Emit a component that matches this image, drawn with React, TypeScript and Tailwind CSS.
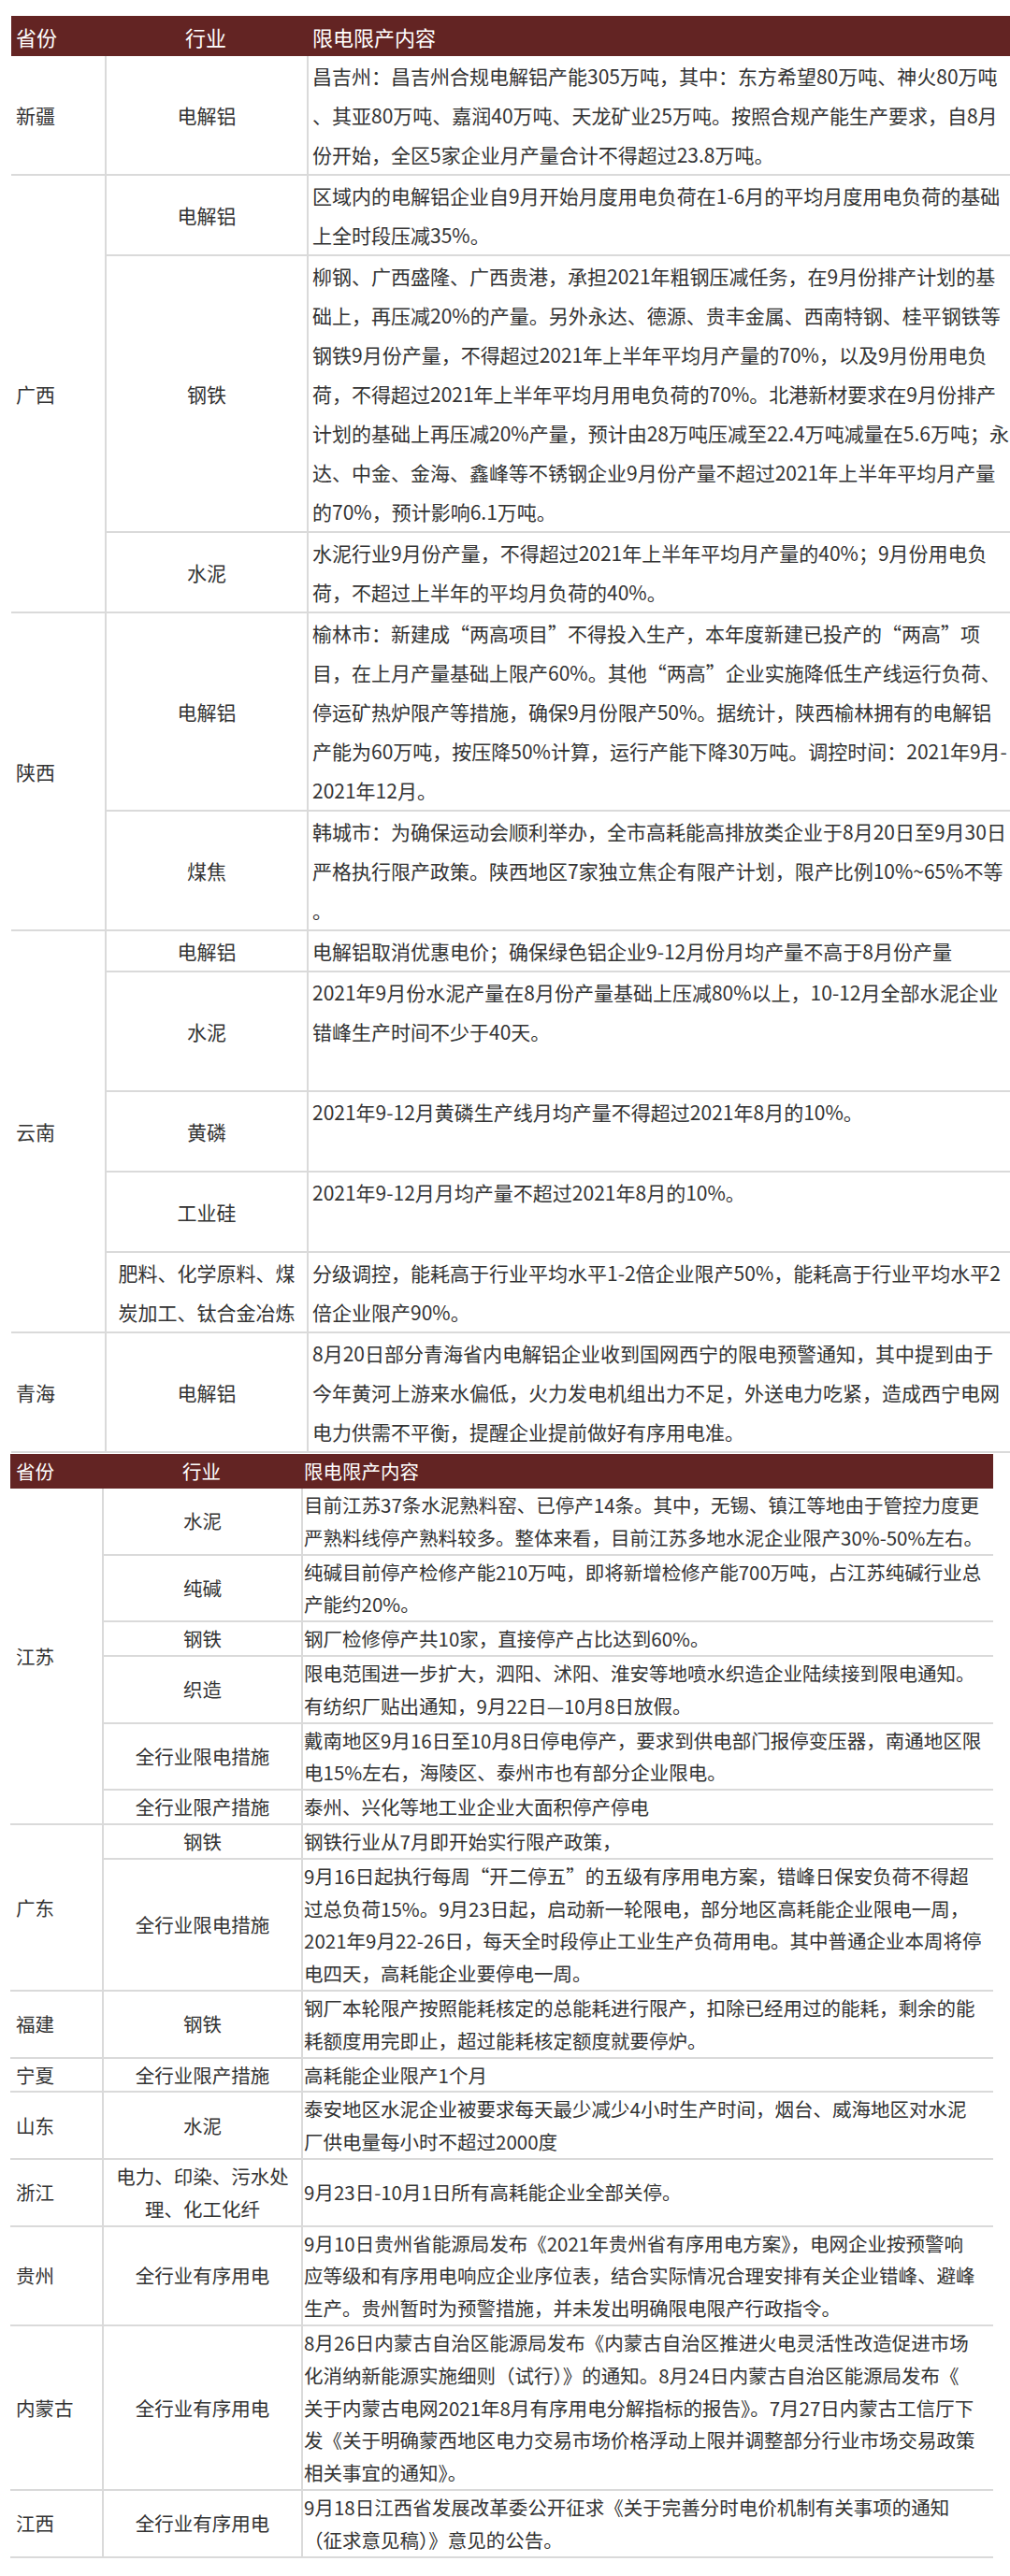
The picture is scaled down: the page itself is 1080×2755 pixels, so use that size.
import React from "react";

type Row = { ind: string[]; lines: string[] };
type Group = { prov: string; rows: Row[] };

const tableOne: Group[] = [
  {
    prov: "新疆",
    rows: [
      {
        ind: ["电解铝"],
        lines: [
          "昌吉州：昌吉州合规电解铝产能305万吨，其中：东方希望80万吨、神火80万吨",
          "、其亚80万吨、嘉润40万吨、天龙矿业25万吨。按照合规产能生产要求，自8月",
          "份开始，全区5家企业月产量合计不得超过23.8万吨。",
        ],
      },
    ],
  },
  {
    prov: "广西",
    rows: [
      {
        ind: ["电解铝"],
        lines: [
          "区域内的电解铝企业自9月开始月度用电负荷在1-6月的平均月度用电负荷的基础",
          "上全时段压减35%。",
        ],
      },
      {
        ind: ["钢铁"],
        lines: [
          "柳钢、广西盛隆、广西贵港，承担2021年粗钢压减任务，在9月份排产计划的基",
          "础上，再压减20%的产量。另外永达、德源、贵丰金属、西南特钢、桂平钢铁等",
          "钢铁9月份产量，不得超过2021年上半年平均月产量的70%，以及9月份用电负",
          "荷，不得超过2021年上半年平均月用电负荷的70%。北港新材要求在9月份排产",
          "计划的基础上再压减20%产量，预计由28万吨压减至22.4万吨减量在5.6万吨；永",
          "达、中金、金海、鑫峰等不锈钢企业9月份产量不超过2021年上半年平均月产量",
          "的70%，预计影响6.1万吨。",
        ],
      },
      {
        ind: ["水泥"],
        lines: [
          "水泥行业9月份产量，不得超过2021年上半年平均月产量的40%；9月份用电负",
          "荷，不超过上半年的平均月负荷的40%。",
        ],
      },
    ],
  },
  {
    prov: "陕西",
    rows: [
      {
        ind: ["电解铝"],
        lines: [
          "榆林市：新建成“两高项目”不得投入生产，本年度新建已投产的“两高”项",
          "目，在上月产量基础上限产60%。其他“两高”企业实施降低生产线运行负荷、",
          "停运矿热炉限产等措施，确保9月份限产50%。据统计，陕西榆林拥有的电解铝",
          "产能为60万吨，按压降50%计算，运行产能下降30万吨。调控时间：2021年9月-",
          "2021年12月。",
        ],
      },
      {
        ind: ["煤焦"],
        lines: [
          "韩城市：为确保运动会顺利举办，全市高耗能高排放类企业于8月20日至9月30日",
          "严格执行限产政策。陕西地区7家独立焦企有限产计划，限产比例10%~65%不等",
          "。",
        ],
      },
    ],
  },
  {
    prov: "云南",
    rows: [
      {
        ind: ["电解铝"],
        lines: ["电解铝取消优惠电价；确保绿色铝企业9-12月份月均产量不高于8月份产量"],
      },
      {
        ind: ["水泥"],
        lines: [
          "2021年9月份水泥产量在8月份产量基础上压减80%以上，10-12月全部水泥企业",
          "错峰生产时间不少于40天。",
          "",
        ],
      },
      {
        ind: ["黄磷"],
        lines: ["2021年9-12月黄磷生产线月均产量不得超过2021年8月的10%。", ""],
      },
      {
        ind: ["工业硅"],
        lines: ["2021年9-12月月均产量不超过2021年8月的10%。", ""],
      },
      {
        ind: ["肥料、化学原料、煤", "炭加工、钛合金冶炼"],
        lines: [
          "分级调控，能耗高于行业平均水平1-2倍企业限产50%，能耗高于行业平均水平2",
          "倍企业限产90%。",
        ],
      },
    ],
  },
  {
    prov: "青海",
    rows: [
      {
        ind: ["电解铝"],
        lines: [
          "8月20日部分青海省内电解铝企业收到国网西宁的限电预警通知，其中提到由于",
          "今年黄河上游来水偏低，火力发电机组出力不足，外送电力吃紧，造成西宁电网",
          "电力供需不平衡，提醒企业提前做好有序用电准。",
        ],
      },
    ],
  },
];

const tableTwo: Group[] = [
  {
    prov: "江苏",
    rows: [
      {
        ind: ["水泥"],
        lines: [
          "目前江苏37条水泥熟料窑、已停产14条。其中，无锡、镇江等地由于管控力度更",
          "严熟料线停产熟料较多。整体来看，目前江苏多地水泥企业限产30%-50%左右。",
        ],
      },
      {
        ind: ["纯碱"],
        lines: [
          "纯碱目前停产检修产能210万吨，即将新增检修产能700万吨，占江苏纯碱行业总",
          "产能约20%。",
        ],
      },
      { ind: ["钢铁"], lines: ["钢厂检修停产共10家，直接停产占比达到60%。"] },
      {
        ind: ["织造"],
        lines: [
          "限电范围进一步扩大，泗阳、沭阳、淮安等地喷水织造企业陆续接到限电通知。",
          "有纺织厂贴出通知，9月22日—10月8日放假。",
        ],
      },
      {
        ind: ["全行业限电措施"],
        lines: [
          "戴南地区9月16日至10月8日停电停产，要求到供电部门报停变压器，南通地区限",
          "电15%左右，海陵区、泰州市也有部分企业限电。",
        ],
      },
      { ind: ["全行业限产措施"], lines: ["泰州、兴化等地工业企业大面积停产停电"] },
    ],
  },
  {
    prov: "广东",
    rows: [
      { ind: ["钢铁"], lines: ["钢铁行业从7月即开始实行限产政策，"] },
      {
        ind: ["全行业限电措施"],
        lines: [
          "9月16日起执行每周“开二停五”的五级有序用电方案，错峰日保安负荷不得超",
          "过总负荷15%。9月23日起，启动新一轮限电，部分地区高耗能企业限电一周，",
          "2021年9月22-26日，每天全时段停止工业生产负荷用电。其中普通企业本周将停",
          "电四天，高耗能企业要停电一周。",
        ],
      },
    ],
  },
  {
    prov: "福建",
    rows: [
      {
        ind: ["钢铁"],
        lines: [
          "钢厂本轮限产按照能耗核定的总能耗进行限产，扣除已经用过的能耗，剩余的能",
          "耗额度用完即止，超过能耗核定额度就要停炉。",
        ],
      },
    ],
  },
  {
    prov: "宁夏",
    rows: [{ ind: ["全行业限产措施"], lines: ["高耗能企业限产1个月"] }],
  },
  {
    prov: "山东",
    rows: [
      {
        ind: ["水泥"],
        lines: [
          "泰安地区水泥企业被要求每天最少减少4小时生产时间，烟台、威海地区对水泥",
          "厂供电量每小时不超过2000度",
        ],
      },
    ],
  },
  {
    prov: "浙江",
    rows: [
      {
        ind: ["电力、印染、污水处", "理、化工化纤"],
        lines: ["9月23日-10月1日所有高耗能企业全部关停。"],
      },
    ],
  },
  {
    prov: "贵州",
    rows: [
      {
        ind: ["全行业有序用电"],
        lines: [
          "9月10日贵州省能源局发布《2021年贵州省有序用电方案》，电网企业按预警响",
          "应等级和有序用电响应企业序位表，结合实际情况合理安排有关企业错峰、避峰",
          "生产。贵州暂时为预警措施，并未发出明确限电限产行政指令。",
        ],
      },
    ],
  },
  {
    prov: "内蒙古",
    rows: [
      {
        ind: ["全行业有序用电"],
        lines: [
          "8月26日内蒙古自治区能源局发布《内蒙古自治区推进火电灵活性改造促进市场",
          "化消纳新能源实施细则（试行）》的通知。8月24日内蒙古自治区能源局发布《",
          "关于内蒙古电网2021年8月有序用电分解指标的报告》。7月27日内蒙古工信厅下",
          "发《关于明确蒙西地区电力交易市场价格浮动上限并调整部分行业市场交易政策",
          "相关事宜的通知》。",
        ],
      },
    ],
  },
  {
    prov: "江西",
    rows: [
      {
        ind: ["全行业有序用电"],
        lines: [
          "9月18日江西省发展改革委公开征求《关于完善分时电价机制有关事项的通知",
          "（征求意见稿）》意见的公告。",
        ],
      },
    ],
  },
];

const Lines = ({ items }: { items: string[] }) => (
  <>
    {items.map((l, i) => (
      <div key={i} className="whitespace-nowrap">
        {l || "\u00a0"}
      </div>
    ))}
  </>
);

const TableOne = () => (
  <table className="ml-[12px] mt-[17px] w-[1068px] table-fixed border-separate border-spacing-0 text-[21px] leading-[42px] text-[#333333]">
    <colgroup>
      <col className="w-[100px]" />
      <col className="w-[216px]" />
      <col />
    </colgroup>
    <thead>
      <tr className="h-[43px] bg-[#632423] text-[22px] font-normal text-white">
        <th className="pl-[5px] text-left font-normal">省份</th>
        <th className="text-center font-normal">行业</th>
        <th className="pl-[6px] text-left font-normal">限电限产内容</th>
      </tr>
    </thead>
    <tbody>
      {tableOne.map((g) =>
        g.rows.map((r, i) => (
          <tr key={g.prov + i}>
            {i === 0 && (
              <td
                rowSpan={g.rows.length}
                className="border-b-2 border-[#dadada] pl-[5px] align-middle"
              >
                {g.prov}
              </td>
            )}
            <td className="border-b-2 border-l-2 border-[#dadada] text-center align-middle">
              <Lines items={r.ind} />
            </td>
            <td className="overflow-hidden border-b-2 border-l-2 border-[#dadada] pl-[4px] align-middle">
              <Lines items={r.lines} />
            </td>
          </tr>
        ))
      )}
    </tbody>
  </table>
);

const TableTwo = () => (
  <table className="ml-[11px] mt-px w-[1051px] table-fixed border-separate border-spacing-0 text-[20.5px] leading-[34.8px] text-[#333333]">
    <colgroup>
      <col className="w-[98px]" />
      <col className="w-[213px]" />
      <col />
    </colgroup>
    <thead>
      <tr className="h-[37px] bg-[#632423] text-[20.5px] text-white">
        <th className="pl-[6px] text-left font-normal">省份</th>
        <th className="text-center font-normal">行业</th>
        <th className="pl-[3px] text-left font-normal">限电限产内容</th>
      </tr>
    </thead>
    <tbody>
      {tableTwo.map((g) =>
        g.rows.map((r, i) => (
          <tr key={g.prov + i}>
            {i === 0 && (
              <td
                rowSpan={g.rows.length}
                className="border-b-2 border-[#dadada] pl-[6px] align-middle"
              >
                {g.prov}
              </td>
            )}
            <td className="border-b-2 border-l-2 border-[#dadada] text-center align-middle">
              <Lines items={r.ind} />
            </td>
            <td className="border-b-2 border-l-2 border-[#dadada] pl-px align-middle">
              <Lines items={r.lines} />
            </td>
          </tr>
        ))
      )}
    </tbody>
  </table>
);

export default function App() {
  return (
    <div className="h-[2755px] w-[1080px] overflow-hidden bg-white font-['Noto_Sans_CJK_SC','Noto_Sans',sans-serif]">
      <TableOne />
      <TableTwo />
    </div>
  );
}
